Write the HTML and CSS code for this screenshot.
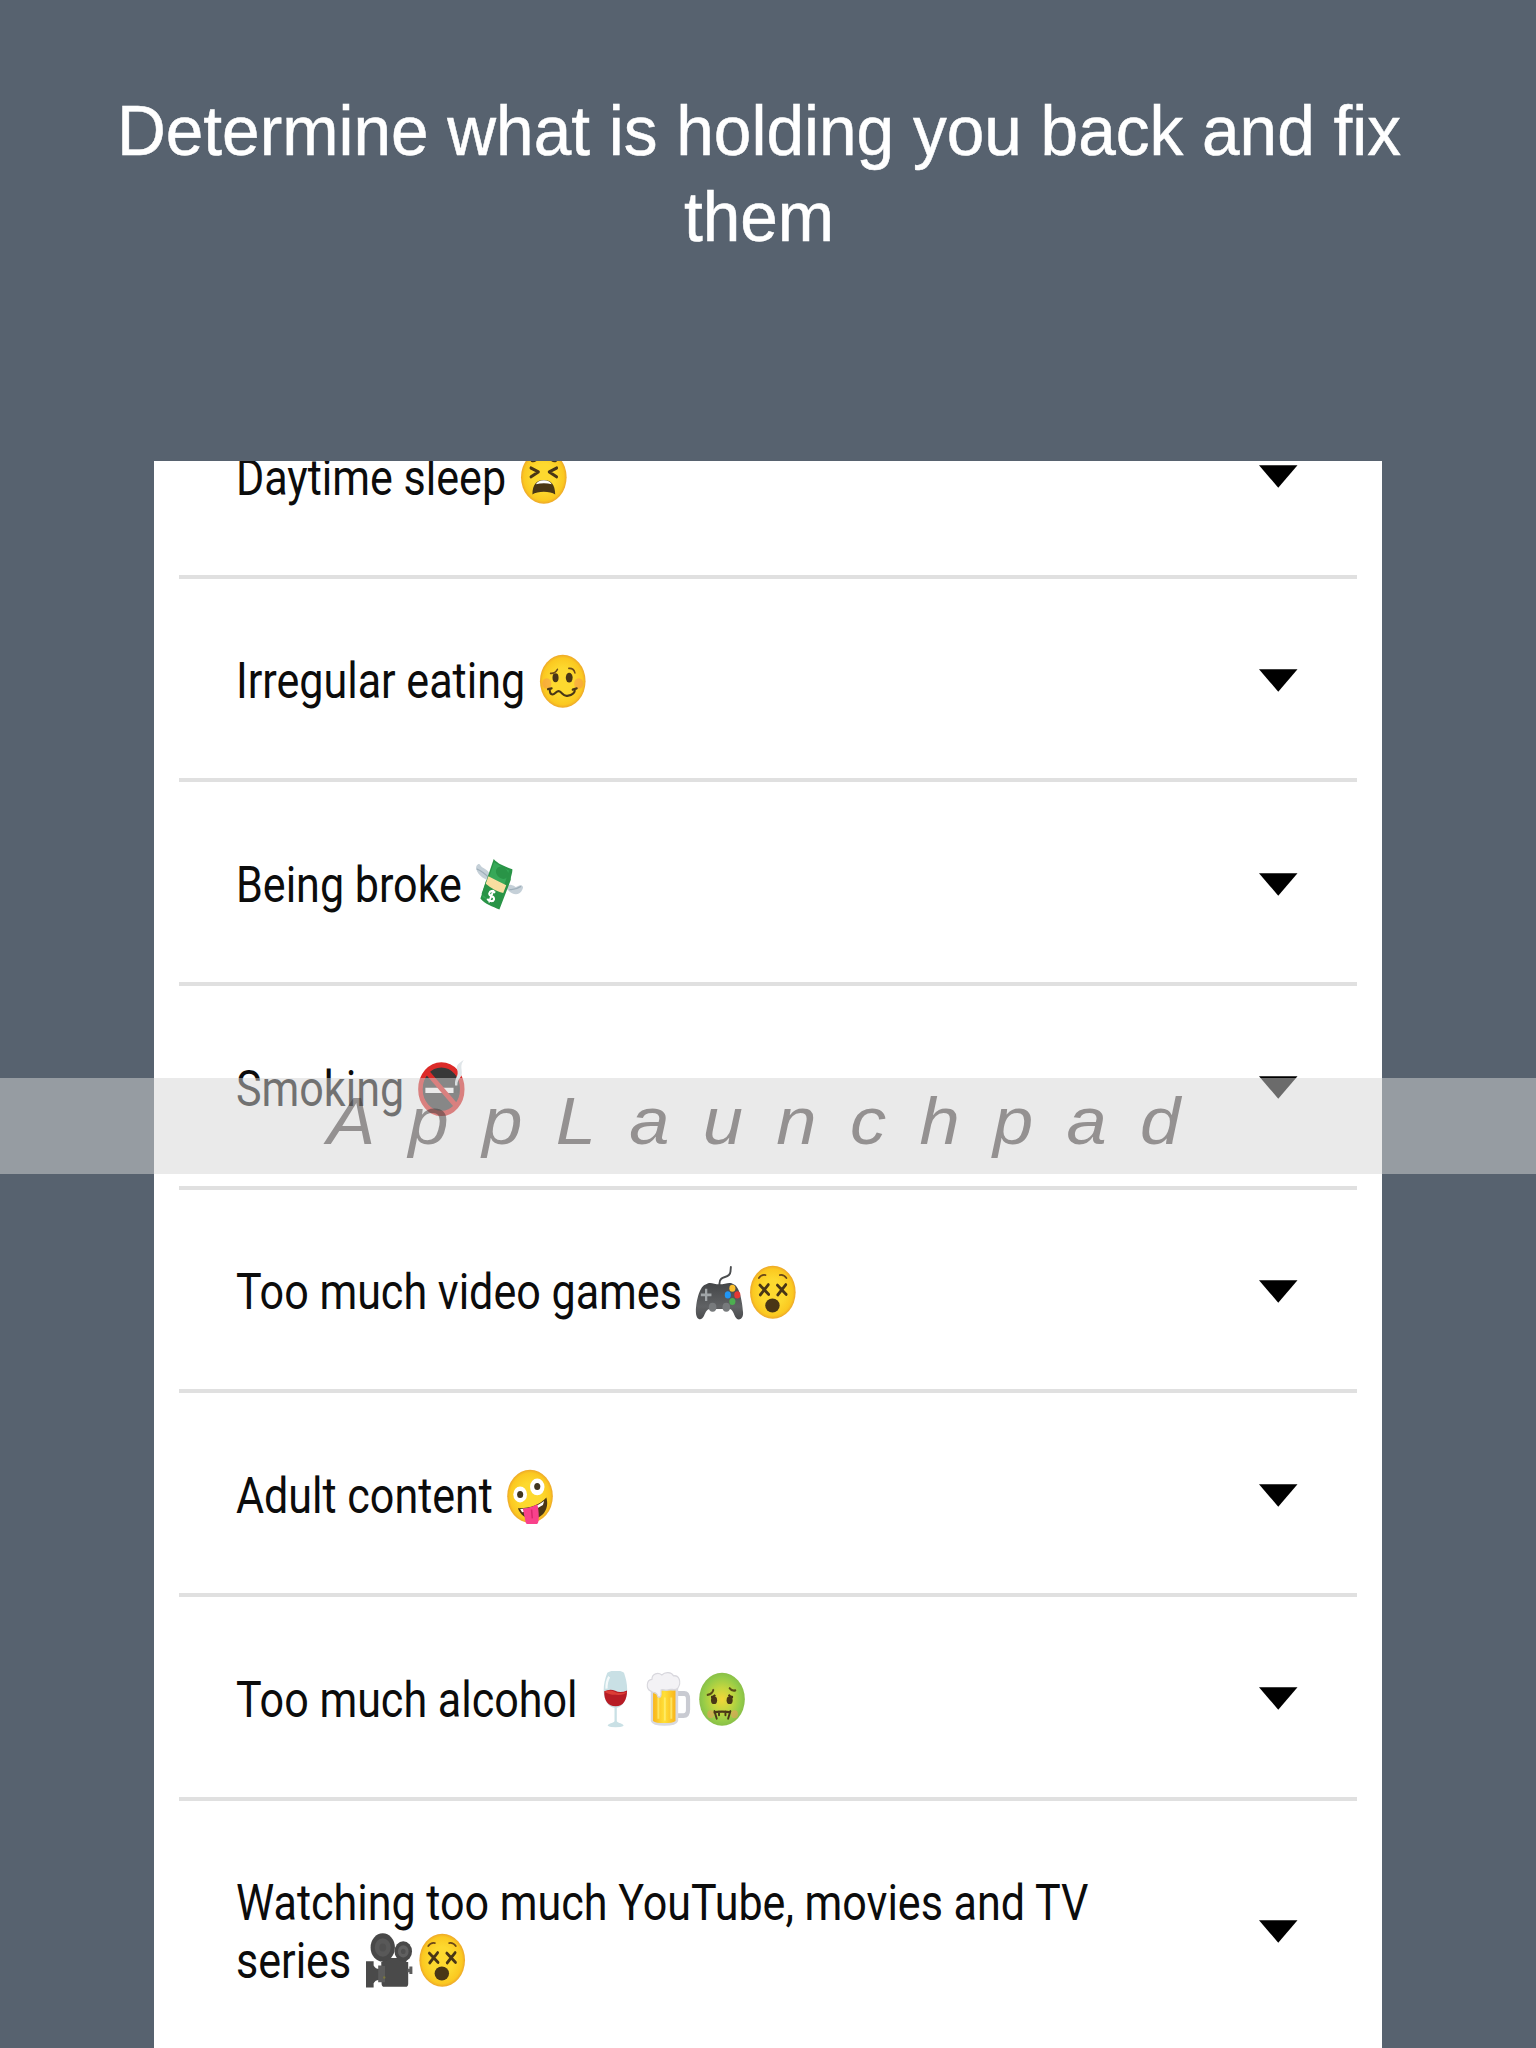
FILE: index.html
```html
<!DOCTYPE html>
<html lang="en">
<head>
<meta charset="utf-8">
<title>Habits</title>
<link rel="stylesheet" href="styles.css">
</head>
<body>
<svg class="defs" aria-hidden="true">
  <defs>
    <radialGradient id="yellow"><stop offset=".5" stop-color="#fdd92f"/><stop offset=".88" stop-color="#fbc820"/><stop offset="1" stop-color="#eda82a"/></radialGradient>
    <radialGradient id="green"><stop offset="0" stop-color="#f3d638"/><stop offset=".45" stop-color="#c3d63f"/><stop offset=".85" stop-color="#93cb48"/><stop offset="1" stop-color="#8abf48"/></radialGradient>
    <linearGradient id="pad" x2="0" y2="1"><stop offset="0" stop-color="#444648"/><stop offset=".65" stop-color="#606264"/><stop offset="1" stop-color="#4a4b4d"/></linearGradient>
    <linearGradient id="beer"><stop offset="0" stop-color="#f9b51c"/><stop offset=".5" stop-color="#ffe037"/><stop offset="1" stop-color="#f9b51c"/></linearGradient>
    <symbol id="tired" viewBox="0 0 128 128">
      <circle cx="64" cy="64" r="60" fill="url(#yellow)"/>
      <g fill="none" stroke="#493616" stroke-width="7" stroke-linecap="round" stroke-linejoin="round">
        <path d="M30 43l20 9-20 11M98 43l-20 9 20 11"/><path d="M32 27q9 2 16-6M96 27q-9 2-16-6" stroke-width="5"/>
      </g>
      <path d="M34 103c0-24 13-33 30-33s30 9 30 33c-13-8-47-8-60 0z" fill="#493616"/>
      <path d="M43 80q6-9 21-9t21 9q-20-5-42 0z" fill="#fff"/>
    </symbol>
    <symbol id="woozy" viewBox="0 0 128 128">
      <circle cx="64" cy="64" r="60" fill="url(#yellow)"/>
      <circle cx="22" cy="69" r="12" fill="#f48b55" opacity=".45"/><circle cx="106" cy="69" r="12" fill="#f48b55" opacity=".45"/>
      <ellipse cx="45" cy="56" rx="8" ry="10" fill="#493616"/><ellipse cx="81" cy="56" rx="9" ry="11" fill="#493616"/>
      <path d="M32 46q12 1 18-9M80 35q13-1 16 10" fill="none" stroke="#6b4818" stroke-width="4" stroke-linecap="round"/>
      <path d="M30 81q-1 12 7 13c8 0 11-11 19-7 7 4 11 12 20 10 9-1 21-5 20-15M25 82l10-2M90 83l11-3" fill="none" stroke="#493616" stroke-width="5" stroke-linecap="round"/>
    </symbol>
    <symbol id="money" viewBox="0 0 128 128">
      <g fill="#c5d0d8"><path d="M42 57C28 54 9 46 4 29c-2-7 7-15 11-8 5 8 22 9 25 22z"/><path d="M83 73c13 15 31 18 40 7 3-6 7-9 1-13-9-3-13 7-20 1-7-3-14-5-18 0z"/></g>
      <path d="M5 29q17 6 36 23M91 76q14 2 31-7" stroke="#9fafba" stroke-width="3" fill="none"/>
      <path d="M50 7c12 12 30 17 49 23 1 9-5 16-4 24L65 121c-18-7-38-12-50-25z" fill="#299447"/>
      <path d="M51 14L20 93l41 18 29-78z" fill="#36a858"/>
      <path d="M18 86l12-31 45 21-14 40z" fill="#299447"/>
      <ellipse cx="72" cy="38" rx="17" ry="13" transform="rotate(28 72 38)" fill="#299447"/>
      <path d="M36 46q22 10 47 20l-8 18q-24-5-46-21z" fill="#f9dea0"/>
      <path d="M54 83q-13-8-16 2c0 8 14 4 13 13-3 8-15 3-18-1M50 77L37 105" fill="none" stroke="#fff" stroke-width="5"/>
    </symbol>
    <symbol id="nosmoke" viewBox="0 0 128 128">
      <circle cx="64" cy="66" r="51" fill="#383838"/>
      <path d="M22 63h74v12H22z" fill="#fff"/><path d="M98 59h4v16h-4zM106 59h4v16h-4z" fill="#333"/>
      <path d="M26 27l77 77" stroke="#dc2a28" stroke-width="12"/>
      <circle cx="64" cy="66" r="55" fill="none" stroke="#dc2a28" stroke-width="12"/>
      <path d="M100 58c-2-20 12-20 5-38-2-8 5-13 18-20-10 12-5 19-5 29 0 13-11 10-12 29z" fill="#dfe5e8"/>
    </symbol>
    <symbol id="gamepad" viewBox="0 0 128 128">
      <path d="M64 54V44c0-20 27-9 29-27l1-10" fill="none" stroke="#4b4d4f" stroke-width="5" stroke-linecap="round"/>
      <path d="M29 46c11-7 19 0 35 0s27-7 37 0c14 3 23 35 25 63 2 19-17 23-23 6-4-9-7-13-14-13H39c-8 0-11 7-15 14-7 15-22 11-22-8 1-28 11-59 27-62z" fill="url(#pad)"/>
      <path d="M29 56v28M15 70h28" stroke="#a0a5a7" stroke-width="6"/>
      <circle cx="46" cy="98" r="10" fill="#777a7c"/><circle cx="82" cy="98" r="10" fill="#777a7c"/>
      <circle cx="98" cy="55" r="8" fill="#fbc02d"/><circle cx="111" cy="70" r="8" fill="#e53935"/><circle cx="86" cy="70" r="8" fill="#2196f3"/><circle cx="98" cy="85" r="8" fill="#4caf50"/>
    </symbol>
    <symbol id="dizzy" viewBox="0 0 128 128">
      <circle cx="64" cy="64" r="60" fill="url(#yellow)"/>
      <g fill="none" stroke="#493616" stroke-width="7" stroke-linecap="round"><path d="M30 48l23 21M52 47L31 70M76 48l23 21M98 47L77 70"/><path d="M27 32q7-9 18-7M82 25q11-2 18 7" stroke="#6b4818" stroke-width="4"/></g>
      <ellipse cx="63" cy="94" rx="19" ry="16" fill="#493616"/>
    </symbol>
    <symbol id="zany" viewBox="0 0 128 128">
      <circle cx="64" cy="64" r="60" fill="url(#yellow)"/>
      <circle cx="38" cy="60" r="18" fill="#fff"/><circle cx="38" cy="60" r="8" fill="#40351e"/>
      <circle cx="83" cy="43" r="19" fill="#fff"/><circle cx="83" cy="42" r="8" fill="#40351e"/>
      <path d="M32 91c30 1 57-7 75-24 8 24-7 45-33 48-20 1-36-9-42-24z" fill="#493616"/>
      <path d="M38 93c25 0 45-6 63-18l-3 9c-16 9-35 15-55 16z" fill="#fff"/>
      <path d="M45 92q20-1 38-10c4 12 5 27 3 40-4 12-30 14-34-1z" fill="#f9418b"/><path d="M68 94l2 20" stroke="#d9286e" stroke-width="4"/>
    </symbol>
    <symbol id="wine" viewBox="0 0 128 128">
      <path d="M43 4c13-7 33-7 44 0 8 20 12 42 4 59-5 13-15 20-23 20v31c4 5 16 4 18 10-9 5-33 5-42 0 2-6 14-5 18-10V83c-10 0-20-7-25-20-7-17-3-39 6-59z" fill="#c9e0e5"/>
      <path d="M35 46q16-7 29-1t31-1c0 22-10 36-30 36S34 67 35 46z" fill="#b71c25"/>
      <path d="M35 47q15-6 27 0t33 0q-8 9-31 7-17 0-29-7z" fill="#dc3d36"/><path d="M48 13q-8 12-7 27" stroke="#fff" stroke-width="6" fill="none" opacity=".8"/>
    </symbol>
    <symbol id="mug" viewBox="0 0 128 128">
      <path d="M87 51h18q10 0 10 13v23q0 14-12 14H87" fill="none" stroke="#c9cbd2" stroke-width="11"/>
      <path d="M17 34h72v79q-4 11-36 11t-36-11z" fill="#d8d9df"/>
      <path d="M23 44h59v69q-8 5-30 5t-29-5z" fill="url(#beer)"/>
      <path d="M37 60v48M54 60v52M71 60v48" stroke="#fff17a" stroke-width="5" opacity=".7"/>
      <path d="M16 45C4 40 5 20 20 19 20 6 36 2 46 9c9-8 25-7 31 2 14-2 22 14 11 28-8 7-17 0-26 4-10 2-12-3-18 0v11c-1 7-9 7-10 0-3-8-9-1-18-9z" fill="#f3f2f5" stroke="#d8d7dd" stroke-width="3"/>
    </symbol>
    <symbol id="sick" viewBox="0 0 128 128">
      <circle cx="64" cy="64" r="60" fill="url(#green)"/>
      <circle cx="34" cy="98" r="9" fill="#e6a05a" opacity=".6"/><circle cx="97" cy="98" r="9" fill="#e6a05a" opacity=".6"/>
      <ellipse cx="43" cy="66" rx="8" ry="9" fill="#493616"/><ellipse cx="84" cy="66" rx="8" ry="9" fill="#493616"/>
      <path d="M26 54q13-2 15-11M84 39q6 7 15 5" fill="none" stroke="#5a4c18" stroke-width="5" stroke-linecap="round"/>
      <path d="M35 59q7 0 11-5M81 54q5 5 12 5" fill="none" stroke="#493616" stroke-width="5"/>
      <path d="M44 94q5-2 20-2t21 2M44 91l6 17M56 92v8M73 92v8M86 91l-6 17" fill="none" stroke="#493616" stroke-width="5" stroke-linecap="round"/>
    </symbol>
    <symbol id="camera" viewBox="0 0 128 128">
      <path d="M4 66h20v10q5 8 15 8v24q-11 1-15 8v10H4zM44 68h71v49q0 7-7 7H52q-7 0-7-7z" fill="#4a4a4a"/>
      <path d="M36 76h18v38H36zM113 83h5v-5h8v17h-8v-4h-5z" fill="#5c5c5c"/>
      <path d="M47 59h63v18H47z" fill="#4a4a4a"/>
      <circle cx="48" cy="35" r="32" fill="#484848"/><circle cx="48" cy="35" r="21" fill="#585858"/><circle cx="48" cy="35" r="9" fill="#505050"/>
      <circle cx="102" cy="44" r="23" fill="#484848"/><circle cx="102" cy="44" r="14" fill="#606060"/><circle cx="102" cy="44" r="6" fill="#505050"/>
      <circle cx="52" cy="103" r="3" fill="#7b793d"/>
    </symbol>
  </defs>
</svg>
<main class="page">
  <h1 class="title">Determine what is holding you back and fix<br>them</h1>
  <section class="card">
    <div class="row"><p class="label">Daytime sleep <svg class="emoji"><use href="#tired"/></svg></p><svg class="arrow" viewBox="0 0 39 23"><path d="M0 0h39L19.5 23z"/></svg></div>
    <div class="row"><p class="label">Irregular eating <svg class="emoji"><use href="#woozy"/></svg></p><svg class="arrow" viewBox="0 0 39 23"><path d="M0 0h39L19.5 23z"/></svg></div>
    <div class="row"><p class="label">Being broke <svg class="emoji"><use href="#money"/></svg></p><svg class="arrow" viewBox="0 0 39 23"><path d="M0 0h39L19.5 23z"/></svg></div>
    <div class="row"><p class="label">Smoking <svg class="emoji"><use href="#nosmoke"/></svg></p><svg class="arrow" viewBox="0 0 39 23"><path d="M0 0h39L19.5 23z"/></svg></div>
    <div class="row"><p class="label">Too much video games <svg class="emoji"><use href="#gamepad"/></svg><svg class="emoji"><use href="#dizzy"/></svg></p><svg class="arrow" viewBox="0 0 39 23"><path d="M0 0h39L19.5 23z"/></svg></div>
    <div class="row"><p class="label">Adult content <svg class="emoji"><use href="#zany"/></svg></p><svg class="arrow" viewBox="0 0 39 23"><path d="M0 0h39L19.5 23z"/></svg></div>
    <div class="row"><p class="label">Too much alcohol <svg class="emoji"><use href="#wine"/></svg><svg class="emoji"><use href="#mug"/></svg><svg class="emoji"><use href="#sick"/></svg></p><svg class="arrow" viewBox="0 0 39 23"><path d="M0 0h39L19.5 23z"/></svg></div>
    <div class="row"><p class="label">Watching too much YouTube, movies and TV<br>series <svg class="emoji"><use href="#camera"/></svg><svg class="emoji"><use href="#dizzy"/></svg></p><svg class="arrow" viewBox="0 0 39 23"><path d="M0 0h39L19.5 23z"/></svg></div>
  </section>
  <div class="watermark"><span class="watermark-text">AppLaunchpad</span></div>
</main>
</body>
</html>
```
FILE: styles.css
```css
* { box-sizing: border-box; }
body { margin: 0; background: #57626f; }
.defs { position: absolute; width: 0; height: 0; }
.page {
  position: relative;
  width: 1536px;
  height: 2048px;
  overflow: hidden;
  display: flex;
  flex-direction: column;
  align-items: center;
}
.title {
  flex: none;
  height: 461px;
  width: 1536px;
  margin: 0;
  padding: 83.5px 18px 0 0;
  font: 400 67.55px/83.65px "Liberation Sans", Arial, sans-serif;
  -webkit-text-stroke: .5px #fff;
  color: #fff;
  text-align: center;
  transform: scaleY(1.04);
  transform-origin: 0 0;
}
.card {
  flex: 1;
  min-height: 0;
  width: 1228px;
  padding: 0 25px;
  background: #fff;
  overflow: hidden;
}
.row {
  display: flex;
  align-items: center;
  justify-content: space-between;
  padding: 73.6px 59.5px 68.8px 57px;
  border-bottom: 4px solid #e0e0e0;
}
.row:first-child { margin-top: -86px; }
.row:last-child { border-bottom: 0; }
.label {
  margin: 0;
  font: 400 50px/57.3px Roboto, sans-serif;
  color: #0c0c0c;
  white-space: nowrap;
  transform: translateY(1px) scaleX(.861);
  transform-origin: 0 50%;
}
.emoji {
  width: 57px;
  height: 56.5px;
  margin: -10px 2.7px -10px 2.5px;
  vertical-align: -1px;
}
.arrow { flex: none; width: 38.5px; height: 23px; margin-top: -1px; }
.watermark {
  position: absolute;
  left: 0;
  top: 1078px;
  width: 100%;
  height: 96px;
  display: flex;
  padding-left: 327px;
  background: rgba(214, 214, 214, .5);
}
.watermark-text {
  font: italic 400 64px/86px "Liberation Sans", Arial, sans-serif;
  letter-spacing: 29.5px;
  color: rgba(62, 56, 56, .5);
  white-space: nowrap;
  transform: scale(1.13, 1.04);
  transform-origin: 0 50%;
}
```
